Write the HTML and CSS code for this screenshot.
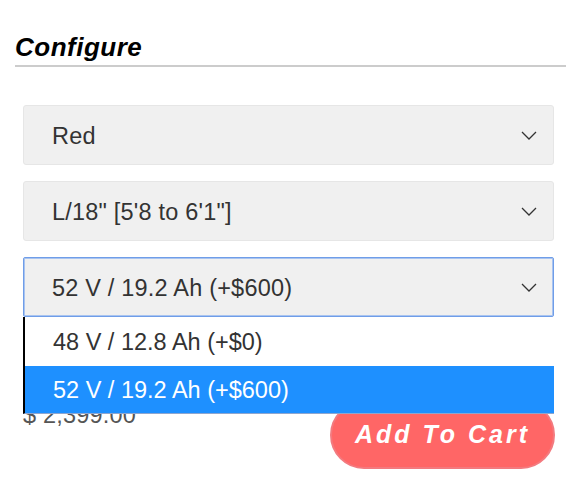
FILE: index.html
```html
<!DOCTYPE html>
<html>
<head>
<meta charset="utf-8">
<link rel="stylesheet" href="styles.css">
</head>
<body>
<div class="wrap">
  <h2 class="title">Configure</h2>
  <div class="rule"></div>
  <div class="fields">
    <div class="select">
      <span class="value">Red</span>
      <svg class="chev" width="16" height="9" viewBox="0 0 16 9"><polyline points="1,1 8,8 15,1" fill="none" stroke="#333" stroke-width="1.3"/></svg>
    </div>
    <div class="select">
      <span class="value">L/18" [5'8 to 6'1"]</span>
      <svg class="chev" width="16" height="9" viewBox="0 0 16 9"><polyline points="1,1 8,8 15,1" fill="none" stroke="#333" stroke-width="1.3"/></svg>
    </div>
    <div class="select-wrap">
      <div class="select focused">
        <span class="value">52 V / 19.2 Ah (+$600)</span>
        <svg class="chev" width="16" height="9" viewBox="0 0 16 9"><polyline points="1,1 8,8 15,1" fill="none" stroke="#333" stroke-width="1.3"/></svg>
      </div>
      <div class="menu">
        <div class="option">48 V / 12.8 Ah (+$0)</div>
        <div class="option active">52 V / 19.2 Ah (+$600)</div>
      </div>
    </div>
    <div class="buy">
      <span class="price">$ 2,399.00</span>
      <button class="cart">Add To Cart</button>
    </div>
  </div>
</div>
</body>
</html>
```
FILE: styles.css
```css
* { box-sizing: border-box; }
body {
  margin: 0;
  background: #fff;
  font-family: "Liberation Sans", Arial, sans-serif;
}
.wrap {
  padding: 32px 0 0 15px;
}
.title {
  margin: 0;
  font-size: 26px;
  line-height: 30px;
  font-weight: bold;
  font-style: italic;
  letter-spacing: 0.5px;
  color: #000;
}
.rule {
  margin-top: 3px;
  border-top: 2px solid #cccccc;
}
.fields {
  display: flex;
  flex-direction: column;
  gap: 16px;
  margin: 38px 12px 0 8px;
}
.select {
  height: 60px;
  display: flex;
  align-items: center;
  justify-content: space-between;
  padding: 0 16px 0 28px;
  background: #f0f0f0;
  border: 1px solid #e6e6e6;
  border-radius: 3px;
  font-size: 23.5px;
  letter-spacing: 0.2px;
  color: #333;
}
.value { padding-top: 3px; }
.select.focused {
  border: 1px solid #6f9de8;
  box-shadow: inset 0 0 0 1px #a9c4f0;
  border-radius: 2px;
}
.chev { display: block; }
.select-wrap { position: relative; }
.menu {
  position: absolute;
  left: 0;
  right: 0;
  top: 100%;
  background: #fff;
  border-left: 2px solid #000;
  border-bottom: 1px solid #8ea6cf;
  z-index: 2;
}
.option {
  height: 49px;
  display: flex;
  align-items: center;
  padding-left: 28px;
  padding-top: 2px;
  font-size: 23.5px;
  color: #333;
}
.option.active {
  height: 47px;
  background: #1e90ff;
  color: #fff;
}
.buy {
  display: flex;
  justify-content: space-between;
  align-items: flex-start;
  margin-top: 68px;
}
.price {
  margin-top: 1px;
  font-size: 23.5px;
  letter-spacing: 0.2px;
  color: #555;
}
.cart {
  width: 225px;
  height: 68px;
  margin-right: -1px;
  border: 2px solid #f37a7f;
  border-radius: 34px;
  background: #ff6666;
  color: #fff;
  font-family: "Liberation Sans", Arial, sans-serif;
  font-size: 25px;
  font-weight: bold;
  font-style: italic;
  letter-spacing: 3px;
  padding: 0 0 2px 0;
}
```
